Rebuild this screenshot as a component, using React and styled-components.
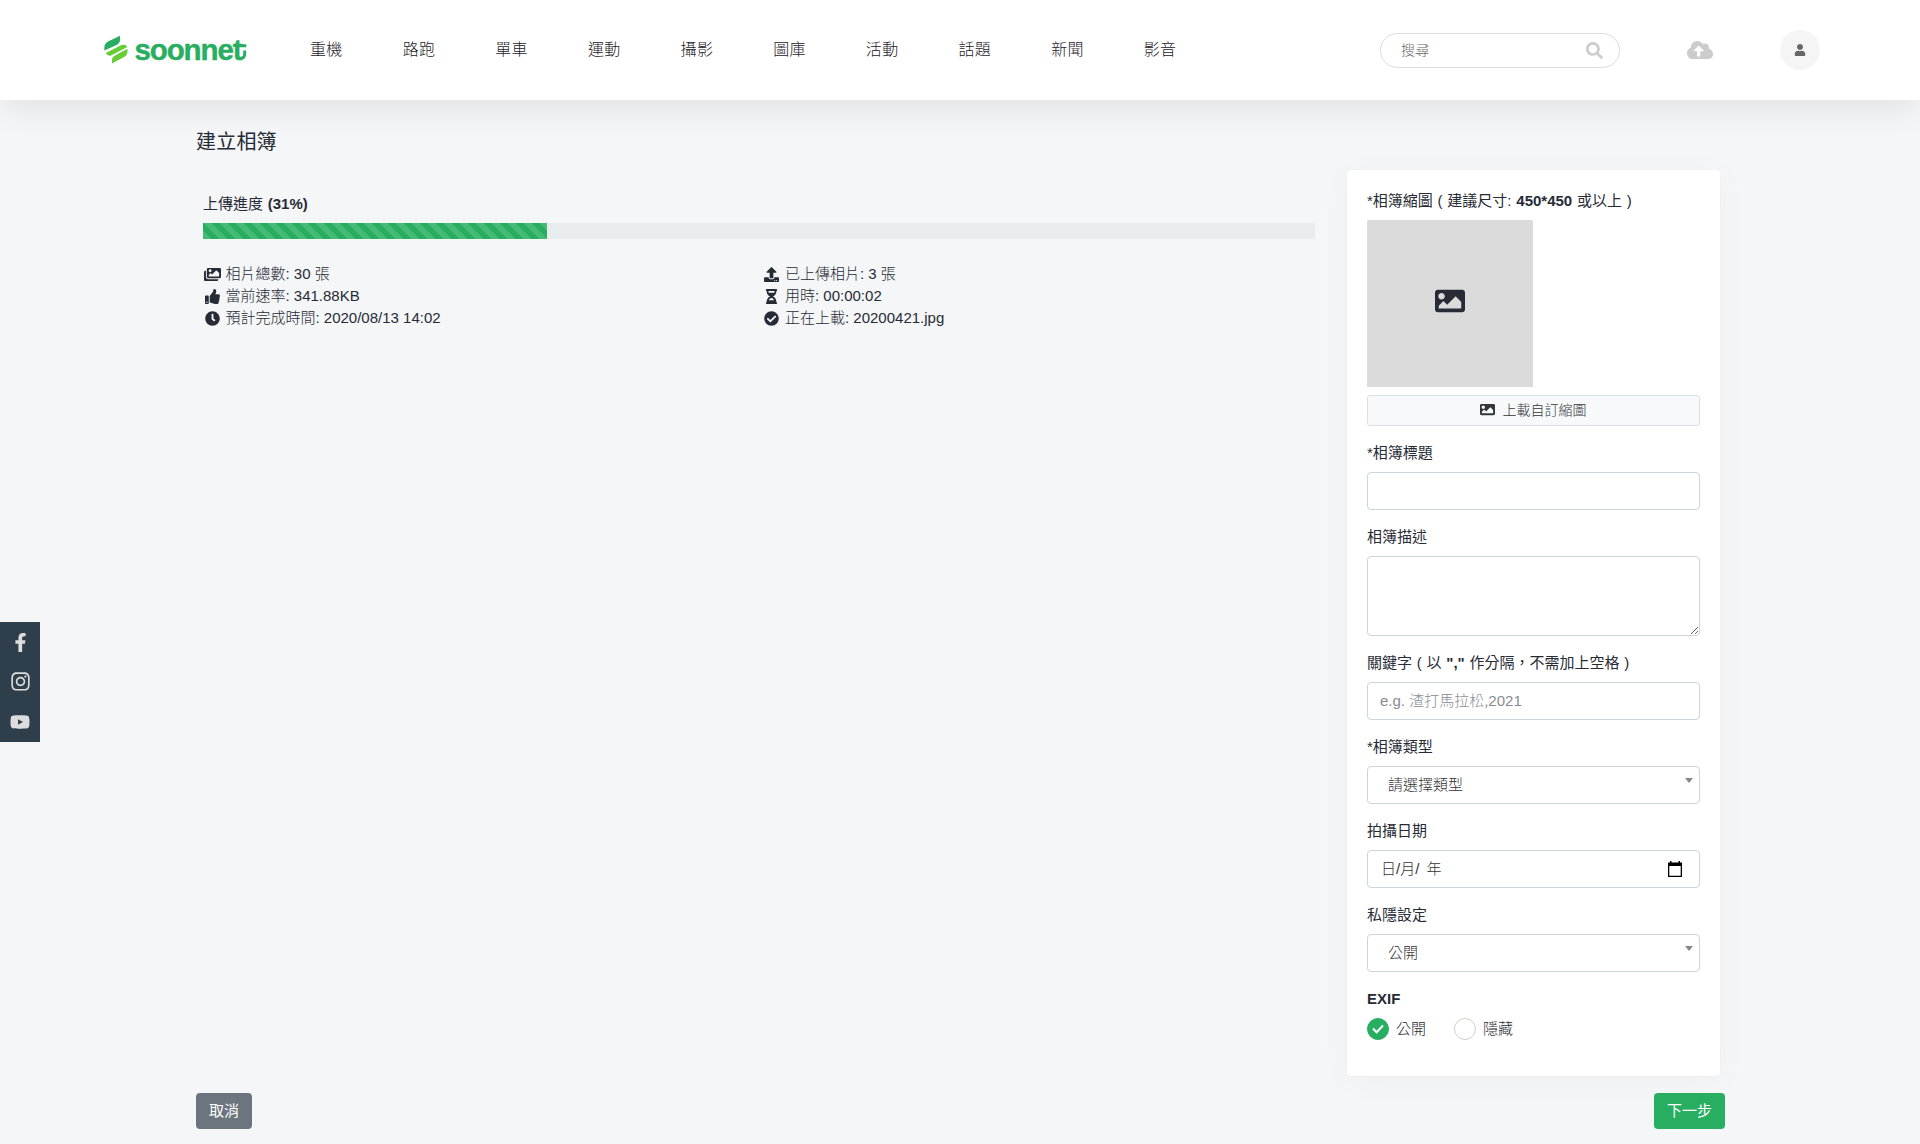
import React from "react";
import styled, { createGlobalStyle } from "styled-components";
import {
  FaImages, FaThumbsUp, FaClock, FaUpload, FaHourglassHalf, FaCheckCircle, FaImage,
  FaFacebookF, FaInstagram, FaYoutube, FaSearch, FaCloudUploadAlt, FaUser,
} from "react-icons/fa";

const Global = createGlobalStyle`
  *, *::before, *::after { box-sizing: border-box; }
  body {
    margin: 0;
    background: #f4f6f8;
    color: #272b35;
    font: 300 15px/22px "Liberation Sans", Arial, "Noto Sans CJK TC", sans-serif;
    overflow: hidden;
  }
  button, input, textarea { font: inherit; }
  svg { display: block; flex: none; }
`;

const Page = styled.div`
  min-height: 1144px;
`;

const Header = styled.header`
  position: relative;
  display: flex;
  align-items: center;
  height: 100px;
  padding: 0 100px 0 104px;
  background: #fff;
  box-shadow: 0 10px 30px rgba(0, 0, 0, 0.08);
`;

const Nav = styled.nav`
  display: flex;
  gap: 60px;
  margin-left: 60px;
`;

const NavLink = styled.a`
  font-size: 16px;
  line-height: 24px;
  letter-spacing: 0.32px;
  color: #1d2029;
`;

const Tools = styled.div`
  display: flex;
  align-items: center;
  margin-left: auto;
  color: #ccc;
`;

const Search = styled.label`
  display: flex;
  align-items: center;
  justify-content: space-between;
  width: 240px;
  height: 35px;
  padding: 0 16px 0 20px;
  border: 1px solid #dcdcdc;
  border-radius: 18px;
`;

const SearchInput = styled.input`
  width: 150px;
  border: 0;
  padding: 0;
  outline: 0;
  background: none;
  font-size: 14px;
  &::placeholder { color: #666; opacity: 1; }
`;

const Upload = styled.a`
  display: flex;
  margin: 0 67px;
`;

const Avatar = styled.a`
  display: flex;
  align-items: center;
  justify-content: center;
  width: 40px;
  height: 40px;
  border-radius: 50%;
  background: #f5f5f5;
  color: #666;
`;

const Main = styled.main`
  width: 1529px;
  margin-left: 196px;
`;

const Title = styled.h1`
  margin: 0;
  padding-top: 27px;
  height: 70px;
  font-size: 20px;
  line-height: 30px;
  font-weight: 400;
  letter-spacing: 0.2px;
`;

const Columns = styled.div`
  display: flex;
  justify-content: space-between;
  padding: 0 5px 0 7px;
`;

const Progress = styled.section`
  width: 1112px;
  padding-top: 23px;
`;

const Track = styled.div`
  height: 16px;
  margin: 8px 0 24px;
  background: #e9ecef;
`;

const Fill = styled.div`
  height: 100%;
  width: ${(p) => p.$percent}%;
  background: #27ae60 linear-gradient(45deg, rgba(255, 255, 255, 0.15) 25%, transparent 25%,
    transparent 50%, rgba(255, 255, 255, 0.15) 50%, rgba(255, 255, 255, 0.15) 75%,
    transparent 75%, transparent) 0 0 / 16px 16px;
`;

const Stats = styled.div`
  display: grid;
  grid-template-columns: 559.5px 1fr;
`;

const Stat = styled.div`
  display: flex;
  align-items: center;
  gap: 4.5px;
  height: 22px;
`;

const StatIcon = styled.span`
  display: flex;
  justify-content: center;
  width: 18px;
`;

const Card = styled.form`
  width: 373px;
  height: 906px;
  padding: 20px;
  background: #fff;
  border-radius: 3px;
  box-shadow: 0 0 1px rgba(40, 40, 90, 0.12), 0 5px 35px rgba(0, 0, 0, 0.03);
`;

const Field = styled.div`
  margin-bottom: 16px;
`;

const Label = styled.div`
  height: 22px;
  margin-bottom: 8px;
  font-weight: 400;
  white-space: nowrap;
  word-spacing: 0.6px;
  b { font-weight: 700; }
`;

const Thumb = styled.div`
  display: flex;
  align-items: center;
  justify-content: center;
  width: 166px;
  height: 167px;
  margin-bottom: 8px;
  padding-bottom: 5px;
  background: #dbdbdb;
  border-radius: 2px 2px 0 0;
`;

const UploadButton = styled.button`
  display: flex;
  align-items: center;
  justify-content: center;
  gap: 8px;
  width: 100%;
  height: 31px;
  padding: 0 1px 2px 0;
  border: 1px solid #dae0e5;
  border-radius: 3px;
  background: #f8f9fa;
  color: #33373b;
  font-size: 14px;
`;

const Control = styled.div`
  display: flex;
  align-items: center;
  justify-content: space-between;
  height: 38px;
  padding: 0 ${(p) => p.$right || 12}px 0 ${(p) => p.$left || 12}px;
  border: 1px solid #ced4da;
  border-radius: 4px;
  background: #fff;
  color: #333;
  word-spacing: 3px;
`;

const TextInput = styled.input`
  display: block;
  width: 100%;
  height: 38px;
  padding: 0 12px 2px;
  border: 1px solid #ced4da;
  border-radius: 4px;
  outline: 0;
  &::placeholder { color: #858d94; opacity: 1; }
`;

const TextArea = styled.textarea`
  display: block;
  width: 100%;
  height: 80px;
  border: 1px solid #ced4da;
  border-radius: 4px;
  outline: 0;
`;

const Caret = styled.span`
  border: 4px solid transparent;
  border-top: 5px solid #888;
  border-bottom: 0;
  margin-bottom: 9px;
`;

const Radios = styled.div`
  display: flex;
  gap: 28px;
`;

const Radio = styled.label`
  display: flex;
  align-items: center;
  gap: 7px;
`;

const Dot = styled.span`
  display: flex;
  align-items: center;
  justify-content: center;
  width: 22px;
  height: 22px;
  border-radius: 50%;
  border: 1px solid ${(p) => (p.$on ? "#27ae60" : "#d3d0cb")};
  background: ${(p) => (p.$on ? "#27ae60" : "#fff")};
`;

const Actions = styled.div`
  display: flex;
  justify-content: space-between;
  margin-top: 17px;
`;

const Action = styled.button`
  height: 36px;
  width: ${(p) => (p.$primary ? 71 : 56)}px;
  padding: 0 0 1px;
  border: 0;
  border-radius: 4px;
  background: ${(p) => (p.$primary ? "#27ae60" : "#6c757d")};
  color: #fff;
  font-weight: 400;
  white-space: nowrap;
`;

const Social = styled.aside`
  position: fixed;
  left: 0;
  top: 622px;
  width: 40px;
  background: #2f3e4b;
  color: #ddd;
`;

const SocialLink = styled.a`
  display: flex;
  align-items: center;
  justify-content: center;
  height: 40px;
  padding-bottom: ${(p) => p.$lift || 0}px;
`;

const NAV = ["重機", "路跑", "單車", "運動", "攝影", "圖庫", "活動", "話題", "新聞", "影音"];

const STATS = [
  [FaImages, "相片總數: 30 張", 17],
  [FaUpload, "已上傳相片: 3 張", 15],
  [FaThumbsUp, "當前速率: 341.88KB", 15],
  [FaHourglassHalf, "用時: 00:00:02", 15],
  [FaClock, "預計完成時間: 2020/08/13 14:02", 15],
  [FaCheckCircle, "正在上載: 20200421.jpg", 15],
];

function Logo() {
  return (
    <svg width="146" height="40" viewBox="0 0 146 40">
      <path d="M0.300 20.500 V18 Q0.300 13.500 4.500 11.300 L16 5.800 V10 Q16 13.200 12.500 15 Z" fill="#27ae60" />
      <path d="M1.800 23 L17 15.200 Q21.500 13.600 23.300 17 L7 25.600 Q3.500 26.500 1.800 23 Z" fill="#6c3" />
      <path d="M8 33.500 V29.500 Q8 27.300 10.500 25.800 L23.500 18.800 V21 Q23.500 25 20 27 Z" fill="#6c3" />
      <g fill="#27ae60" stroke="#27ae60" strokeWidth="0.4" fontFamily="Liberation Sans, Arial, sans-serif" fontWeight="700">
        <text x="30.500" y="30" fontSize="29.500" textLength="108" lengthAdjust="spacing">soonnet</text>
      </g>
      <path d="M135 28.400 Q140.700 28.800 140.700 24 V20.500 M135 15.800 H142.300" fill="none" stroke="#27ae60" strokeWidth="3" />
    </svg>
  );
}

function Calendar() {
  return (
    <svg width="14" height="16" viewBox="0 0 14 16">
      <path d="M2 0h1.500v1.500h7V0H12v1.500h2V16H0V1.500h2zM1.300 5v9.700h11.400V5z" fill="#000" fillRule="evenodd" />
    </svg>
  );
}

export default function App() {
  return (
    <Page>
      <Global />
      <Header>
        <Logo />
        <Nav>{NAV.map((n) => <NavLink key={n}>{n}</NavLink>)}</Nav>
        <Tools>
          <Search>
            <SearchInput placeholder="搜尋" />
            <FaSearch size={17} />
          </Search>
          <Upload><FaCloudUploadAlt size={26} /></Upload>
          <Avatar><FaUser size={12} /></Avatar>
        </Tools>
      </Header>
      <Main>
        <Title>建立相簿</Title>
        <Columns>
          <Progress>
            <Label>上傳進度 <b>(31%)</b></Label>
            <Track><Fill $percent={30.95} /></Track>
            <Stats>
              {STATS.map(([Icon, text, size]) => (
                <Stat key={text}><StatIcon><Icon size={size} /></StatIcon>{text}</Stat>
              ))}
            </Stats>
          </Progress>
          <Card>
            <Field>
              <Label>*相簿縮圖 ( 建議尺寸: <b>450*450</b> 或以上 )</Label>
              <Thumb><FaImage size={30} /></Thumb>
              <UploadButton type="button"><FaImage size={15} />上載自訂縮圖</UploadButton>
            </Field>
            <Field><Label>*相簿標題</Label><TextInput /></Field>
            <Field><Label>相簿描述</Label><TextArea /></Field>
            <Field>
              <Label>關鍵字 ( 以 <b>","</b> 作分隔，不需加上空格 )</Label>
              <TextInput placeholder="e.g. 渣打馬拉松,2021" />
            </Field>
            <Field><Label>*相簿類型</Label><Control $left={20} $right={6}>請選擇類型<Caret /></Control></Field>
            <Field><Label>拍攝日期</Label><Control $left={13} $right={17}>日/月/ 年<Calendar /></Control></Field>
            <Field><Label>私隱設定</Label><Control $left={20} $right={6}>公開<Caret /></Control></Field>
            <Label><b>EXIF</b></Label>
            <Radios>
              <Radio>
                <Dot $on>
                  <svg width="12" height="10" viewBox="0 0 12 10">
                    <path d="M1 4.500L4.600 8.200L11 1.500" fill="none" stroke="#fff" strokeWidth="2" />
                  </svg>
                </Dot>
                公開
              </Radio>
              <Radio><Dot />隱藏</Radio>
            </Radios>
          </Card>
        </Columns>
        <Actions>
          <Action>取消</Action>
          <Action $primary>下一步</Action>
        </Actions>
      </Main>
      <Social>
        <SocialLink><FaFacebookF size={19} /></SocialLink>
        <SocialLink $lift={1}><FaInstagram size={21} /></SocialLink>
        <SocialLink><FaYoutube size={20} /></SocialLink>
      </Social>
    </Page>
  );
}
